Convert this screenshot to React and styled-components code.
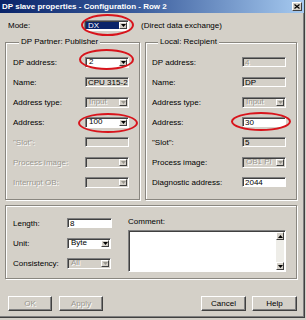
import React from "react";
import styled, { createGlobalStyle, css } from "styled-components";

const GlobalStyle = createGlobalStyle`
  html, body {
    margin: 0;
    padding: 0;
    background: #d4d0c8;
  }
  body {
    font-family: "Liberation Sans", Arial, sans-serif;
    font-size: 8px;
    color: #000;
  }
`;

const Window = styled.div`
  width: 305px;
  height: 318px;
  box-sizing: border-box;
  background: #d4d0c8;
  border-right: 1px solid #404040;
  border-bottom: 1px solid #404040;
  box-shadow: inset -1px -1px 0 #808080;
  display: flex;
  flex-direction: column;
`;

const TitleBar = styled.div`
  height: 13px;
  display: flex;
  align-items: center;
  justify-content: space-between;
  padding: 0 2px 0 2px;
  background: linear-gradient(to right, #0a246a 0%, #3a5c9c 45%, #a6caf0 100%);
  color: #fff;
  font-weight: bold;
  font-size: 8px;
  white-space: nowrap;
`;

const CloseBox = styled.div`
  width: 10px;
  height: 9px;
  box-sizing: border-box;
  background: #d4d0c8;
  border: 1px solid;
  border-color: #fff #404040 #404040 #fff;
  display: flex;
  align-items: center;
  justify-content: center;
`;

const ModeRow = styled.div`
  display: flex;
  align-items: center;
  height: 11px;
  margin-top: 7px;
  padding-left: 8px;
`;

const ModeLabel = styled.span`
  width: 76px;
`;

const ModeNote = styled.span`
  margin-left: 12px;
`;

const Groups = styled.div`
  display: flex;
  gap: 5px;
  margin: 6px 0 0 5px;
`;

const Group = styled.fieldset`
  margin: 0;
  min-width: 0;
  box-sizing: border-box;
  width: ${(p) => p.$width}px;
  padding: 10px 0 12px ${(p) => p.$padLeft}px;
  border: 1px solid #8a8780;
  box-shadow: inset 1px 1px 0 #fff, 1px 1px 0 #fff;
  display: grid;
  grid-template-columns: ${(p) => p.$labelWidth}px 44px;
  grid-auto-rows: 10px;
  row-gap: 10px;
  align-items: center;
`;

const Legend = styled.legend`
  padding: 0 2px;
  margin-left: 6px;
  line-height: 10px;
  background: #d4d0c8;
`;

const Label = styled.span`
  white-space: nowrap;
  color: ${(p) => (p.$disabled ? "#9a978f" : "#000")};
  text-shadow: ${(p) => (p.$disabled ? "1px 1px 0 #fff" : "none")};
`;

const sunken = css`
  box-sizing: border-box;
  border: 1px solid;
  border-color: #808080 #fff #fff #808080;
  box-shadow: inset 1px 1px 0 #404040;
`;

const Field = styled.div`
  ${sunken};
  width: ${(p) => p.$width || 44}px;
  height: ${(p) => p.$height || 10}px;
  padding: 0 2px;
  display: flex;
  align-items: center;
  overflow: hidden;
  white-space: nowrap;
  background: ${(p) => (p.$white ? "#fff" : "#d4d0c8")};
  color: ${(p) => (p.$disabled ? "#9a978f" : "#000")};
  text-shadow: ${(p) => (p.$disabled ? "1px 1px 0 #fff" : "none")};
`;

const ComboBox = styled.div`
  ${sunken};
  width: ${(p) => p.$width || 44}px;
  height: 11px;
  padding: 1px;
  display: flex;
  background: ${(p) => (p.$white ? "#fff" : "#d4d0c8")};
`;

const ComboText = styled.div`
  flex: 1;
  padding-left: 2px;
  display: flex;
  align-items: center;
  overflow: hidden;
  white-space: nowrap;
  line-height: 8px;
  background: ${(p) => (p.$selected ? "#0a246a" : "transparent")};
  color: ${(p) => (p.$selected ? "#fff" : p.$disabled ? "#9a978f" : "#000")};
  text-shadow: ${(p) => (p.$disabled ? "1px 1px 0 #fff" : "none")};
`;

const ArrowButton = styled.div`
  width: 8px;
  box-sizing: border-box;
  background: #d4d0c8;
  border: 1px solid;
  border-color: #fff #404040 #404040 #fff;
  display: flex;
  align-items: center;
  justify-content: center;
`;

const Marked = styled.div`
  position: relative;
`;

const Ellipse = styled.div`
  position: absolute;
  top: ${(p) => -p.$t}px;
  left: ${(p) => -p.$l}px;
  right: ${(p) => -p.$r}px;
  bottom: ${(p) => -p.$b}px;
  border: 2px solid #d8141c;
  border-radius: 50%;
  pointer-events: none;
`;

const BottomBox = styled.div`
  margin: 5px 0 0 5px;
  width: 292px;
  height: 74px;
  box-sizing: border-box;
  border: 1px solid #8a8780;
  box-shadow: inset 1px 1px 0 #fff, 1px 1px 0 #fff;
  padding: 12px 10px 0 7px;
  display: flex;
`;

const FormColumn = styled.div`
  display: grid;
  grid-template-columns: 54px 45px;
  grid-auto-rows: 10px;
  row-gap: 10px;
  align-items: center;
  align-content: start;
`;

const CommentColumn = styled.div`
  margin-left: 16px;
  display: flex;
  flex-direction: column;
`;

const CommentLabel = styled.span`
  line-height: 10px;
  margin-top: -1px;
`;

const CommentBox = styled.div`
  ${sunken};
  margin-top: 3px;
  width: 158px;
  height: 42px;
  background: #fff;
  display: flex;
  justify-content: flex-end;
  padding: 1px;
`;

const ScrollBar = styled.div`
  width: 8px;
  display: flex;
  flex-direction: column;
  justify-content: space-between;
  background: #eeede8;
`;

const ScrollButton = styled.div`
  height: 8px;
  box-sizing: border-box;
  background: #d4d0c8;
  border: 1px solid;
  border-color: #fff #404040 #404040 #fff;
  display: flex;
  align-items: center;
  justify-content: center;
`;

const ButtonRow = styled.div`
  display: flex;
  margin: 17px 0 0 8px;
  padding-right: 7px;
`;

const Button = styled.div`
  width: ${(p) => p.$width || 44}px;
  height: 15px;
  box-sizing: border-box;
  margin-right: ${(p) => p.$gap || 0}px;
  margin-left: ${(p) => (p.$push ? "auto" : "0")};
  background: #d4d0c8;
  border: 1px solid;
  border-color: #fff #404040 #404040 #fff;
  box-shadow: inset -1px -1px 0 #808080;
  display: flex;
  align-items: center;
  justify-content: center;
  color: ${(p) => (p.$disabled ? "#9a978f" : "#000")};
  text-shadow: ${(p) => (p.$disabled ? "1px 1px 0 #fff" : "none")};
`;

function Arrow({ up, color = "#000" }) {
  return (
    <svg width="5" height="3" viewBox="0 0 5 3">
      <polygon points={up ? "0,3 5,3 2.5,0" : "0,0 5,0 2.5,3"} fill={color} />
    </svg>
  );
}

function Combo({ value, width, white, disabled, selected }) {
  return (
    <ComboBox $width={width} $white={white}>
      <ComboText $disabled={disabled} $selected={selected}>{value}</ComboText>
      <ArrowButton>
        <Arrow color={disabled ? "#9a978f" : "#000"} />
      </ArrowButton>
    </ComboBox>
  );
}

function Ring({ t, l, r, b, children }) {
  return (
    <Marked>
      {children}
      <Ellipse $t={t} $l={l} $r={r} $b={b} />
    </Marked>
  );
}

export default function App() {
  return (
    <>
      <GlobalStyle />
      <Window>
        <TitleBar>
          <span>DP slave properties - Configuration - Row 2</span>
          <CloseBox>
            <svg width="6" height="5" viewBox="0 0 6 5">
              <path d="M0.5 0.5 L5.5 4.5 M5.5 0.5 L0.5 4.5" stroke="#000" strokeWidth="1.2" />
            </svg>
          </CloseBox>
        </TitleBar>

        <ModeRow>
          <ModeLabel>Mode:</ModeLabel>
          <Ring t={6} l={3} r={5} b={5}>
            <Combo value="DX" width={45} white selected />
          </Ring>
          <ModeNote>(Direct data exchange)</ModeNote>
        </ModeRow>

        <Groups>
          <Group $width={135} $padLeft={7} $labelWidth={72}>
            <Legend>DP Partner: Publisher</Legend>
            <Label>DP address:</Label>
            <Ring t={8} l={6} r={5} b={2}>
              <Combo value="2" white />
            </Ring>
            <Label>Name:</Label>
            <Field>CPU 315-2 DP</Field>
            <Label>Address type:</Label>
            <Combo value="Input" disabled />
            <Label>Address:</Label>
            <Ring t={4} l={7} r={9} b={5}>
              <Combo value="100" white />
            </Ring>
            <Label $disabled>"Slot":</Label>
            <Field />
            <Label $disabled>Process image:</Label>
            <Combo value="" disabled />
            <Label $disabled>Interrupt OB:</Label>
            <Combo value="" disabled />
          </Group>

          <Group $width={152} $padLeft={6} $labelWidth={90}>
            <Legend>Local: Recipient</Legend>
            <Label>DP address:</Label>
            <Field $disabled>4</Field>
            <Label>Name:</Label>
            <Field>DP</Field>
            <Label>Address type:</Label>
            <Combo value="Input" disabled />
            <Label>Address:</Label>
            <Ring t={5} l={11} r={5} b={4}>
              <Field $white>30</Field>
            </Ring>
            <Label>"Slot":</Label>
            <Field>5</Field>
            <Label>Process image:</Label>
            <Combo value="OB1 PI" disabled />
            <Label>Diagnostic address:</Label>
            <Field $white>2044</Field>
          </Group>
        </Groups>

        <BottomBox>
          <FormColumn>
            <Label>Length:</Label>
            <Field $white $width={45}>8</Field>
            <Label>Unit:</Label>
            <Combo value="Byte" white />
            <Label>Consistency:</Label>
            <Combo value="All" disabled />
          </FormColumn>
          <CommentColumn>
            <CommentLabel>Comment:</CommentLabel>
            <CommentBox>
              <ScrollBar>
                <ScrollButton>
                  <Arrow up />
                </ScrollButton>
                <ScrollButton>
                  <Arrow />
                </ScrollButton>
              </ScrollBar>
            </CommentBox>
          </CommentColumn>
        </BottomBox>

        <ButtonRow>
          <Button $disabled $gap={7}>OK</Button>
          <Button $disabled>Apply</Button>
          <Button $push $width={45} $gap={6}>Cancel</Button>
          <Button $width={45}>Help</Button>
        </ButtonRow>
      </Window>
    </>
  );
}
